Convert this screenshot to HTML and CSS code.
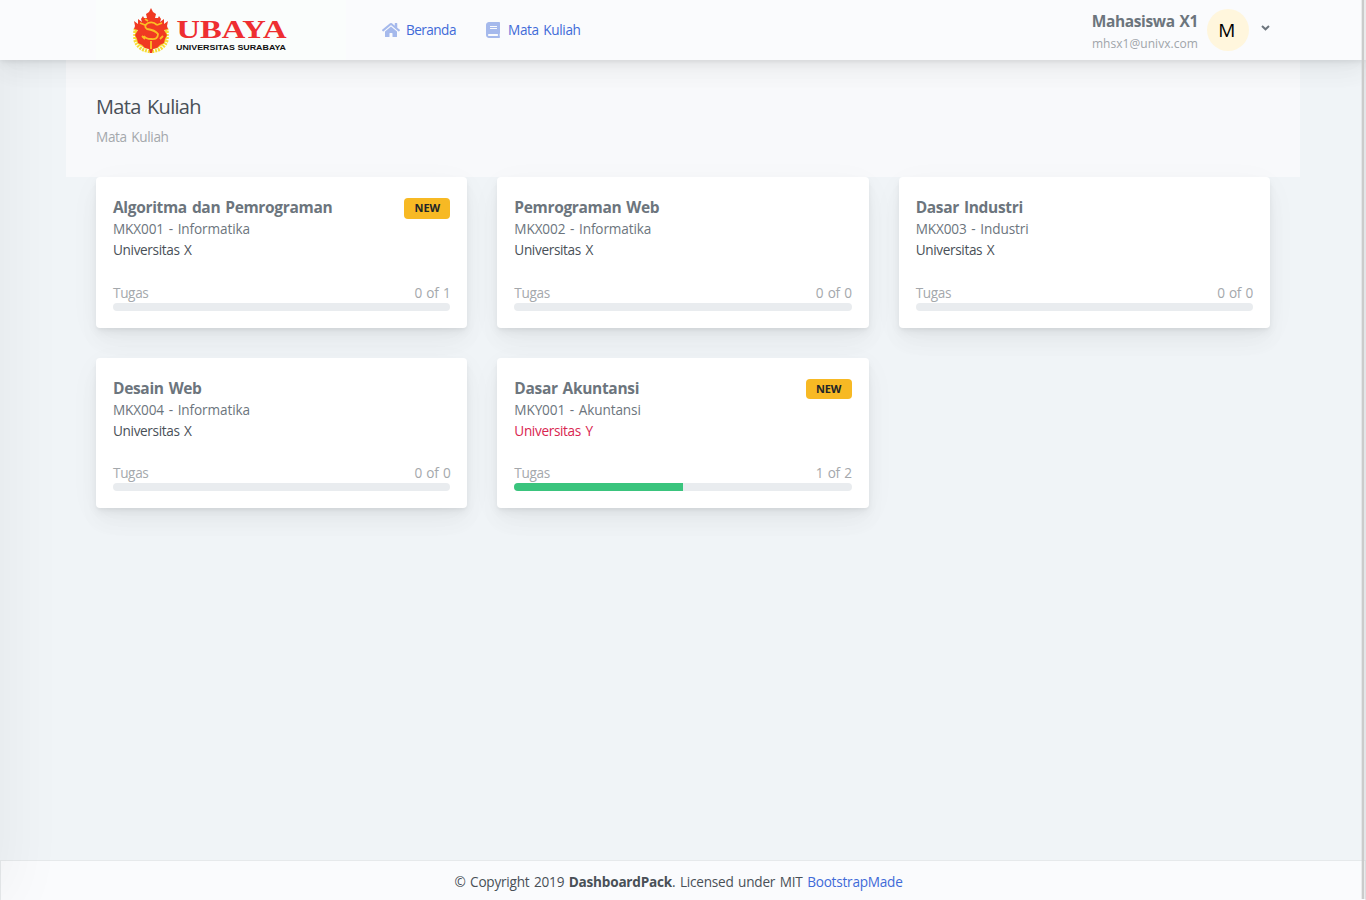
FILE: index.html
```html
<!DOCTYPE html>
<html lang="id">
<head>
<meta charset="utf-8">
<title>Mata Kuliah</title>
<link rel="stylesheet" href="styles.css">
</head>
<body>
<div class="app">
  <header class="header">
    <div class="brand">
      <svg class="brand-logo" width="156" height="50" viewBox="0 0 156 50" role="img" aria-label="UBAYA Universitas Surabaya">
        <g fill="none" stroke="#f7dc35">
          <path d="M1.500 24.500h5M31.500 24.500h5" stroke-width="2"/>
          <path d="M4 25v8q2 8 13 10M34 25v8q-2 8-13 10" stroke-width="2"/>
          <path d="M3 26v9q3 10 15 11.500M35 26v9q-3 10-15 11.500" stroke-width="3.500" stroke-dasharray="2 1"/>
        </g>
        <path fill="#f03a22" d="M19 3l2 4 3 2-1 4 3 0 1-2 2 3-1 3 4-3 0 5 4-3-1 5 1 3-4 1 3 5-2 4-1 4-4 2-3 3-4 1-1 4h-2l-1-4-4-1-3-3-4-2-1-4-2-4 3-5-4-1 1-3-1-5 4 3 0-5 4 3-1-3 2-3 1 2 3 0-1-4 3-2z"/>
        <path d="M25 20q-4-4-9-2-5 3-1 6 8 1 11 5 0 6-7 5-5 0-7-3M13 14l3 2M8 18l5 2M30 18l-5 2M19 36v8M10 31l3 3M28 34l3-3" fill="none" stroke="#fbbf24" stroke-width="1.800"/>
        <text class="logo-name" x="44.500" y="33" textLength="110" lengthAdjust="spacingAndGlyphs">UBAYA</text>
        <text class="logo-sub" x="44" y="45" textLength="110" lengthAdjust="spacingAndGlyphs">UNIVERSITAS SURABAYA</text>
      </svg>
    </div>
    <nav class="nav">
      <a class="nav-link" href="#"><svg class="home-icon" width="18" height="16" viewBox="0 0 576 512"><path d="M280.37 148.26L96 300.11V464a16 16 0 0 0 16 16l112.06-.29a16 16 0 0 0 15.92-16V368a16 16 0 0 1 16-16h64a16 16 0 0 1 16 16v95.64a16 16 0 0 0 16 16.05L464 480a16 16 0 0 0 16-16V300L295.67 148.26a12.19 12.19 0 0 0-15.3 0zM571.6 251.47L488 182.56V44.05a12 12 0 0 0-12-12h-56a12 12 0 0 0-12 12v72.61L318.47 43a48 48 0 0 0-61 0L4.34 251.47a12 12 0 0 0-1.6 16.9l25.5 31A12 12 0 0 0 45.15 301l235.22-193.74a12.19 12.19 0 0 1 15.3 0L530.9 301a12 12 0 0 0 16.9-1.6l25.5-31a12 12 0 0 0-1.7-16.93z"/></svg><span class="home-label">Beranda</span></a>
      <a class="nav-link" href="#"><svg class="book-icon" width="14" height="16" viewBox="0 0 448 512"><path d="M448 360V24c0-13.300-10.700-24-24-24H96C43 0 0 43 0 96v320c0 53 43 96 96 96h328c13.300 0 24-10.700 24-24v-16c0-7.500-3.500-14.300-8.900-18.700-4.200-15.400-4.200-59.300 0-74.700 5.400-4.300 8.900-11.100 8.900-18.600zM128 134c0-3.300 2.700-6 6-6h212c3.300 0 6 2.700 6 6v20c0 3.300-2.700 6-6 6H134c-3.300 0-6-2.700-6-6v-20zm0 64c0-3.300 2.700-6 6-6h212c3.300 0 6 2.700 6 6v20c0 3.300-2.700 6-6 6H134c-3.300 0-6-2.700-6-6v-20zm253.400 250H96c-17.700 0-32-14.300-32-32 0-17.600 14.400-32 32-32h285.400c-1.900 17.100-1.900 46.900 0 64z"/></svg><span class="nav-label">Mata Kuliah</span></a>
    </nav>
    <div class="user">
      <div class="user-text"><div class="user-name">Mahasiswa X1</div><div class="user-mail">mhsx1@univx.com</div></div>
      <div class="avatar">M</div>
      <svg class="caret" width="9" height="6" viewBox="0 0 9 6"><path d="M1 1l3.500 3.300L8 1"/></svg>
    </div>
  </header>
  <main class="main">
    <section class="title-bar"><h1 class="title">Mata Kuliah</h1><p class="subtitle">Mata Kuliah</p></section>
    <section class="cards">
      <article class="card"><div class="card-head"><h2 class="course">Algoritma dan Pemrograman</h2><span class="badge">NEW</span></div><div class="code">MKX001 - Informatika</div><div class="univ">Universitas X</div><div class="task"><span>Tugas</span><span class="count">0 of 1</span></div><div class="track"></div></article>
      <article class="card"><div class="card-head"><h2 class="course">Pemrograman Web</h2></div><div class="code">MKX002 - Informatika</div><div class="univ">Universitas X</div><div class="task"><span>Tugas</span><span class="count">0 of 0</span></div><div class="track"></div></article>
      <article class="card"><div class="card-head"><h2 class="course">Dasar Industri</h2></div><div class="code">MKX003 - Industri</div><div class="univ">Universitas X</div><div class="task"><span>Tugas</span><span class="count">0 of 0</span></div><div class="track"></div></article>
      <article class="card"><div class="card-head"><h2 class="course">Desain Web</h2></div><div class="code">MKX004 - Informatika</div><div class="univ">Universitas X</div><div class="task"><span>Tugas</span><span class="count">0 of 0</span></div><div class="track"></div></article>
      <article class="card"><div class="card-head"><h2 class="course">Dasar Akuntansi</h2><span class="badge">NEW</span></div><div class="code">MKY001 - Akuntansi</div><div class="univ other">Universitas Y</div><div class="task"><span>Tugas</span><span class="count">1 of 2</span></div><div class="track"><div class="fill" style="width:50%"></div></div></article>
    </section>
  </main>
  <footer class="footer"><p class="legal">© Copyright 2019 <strong>DashboardPack</strong>. Licensed under MIT <a href="#">BootstrapMade</a></p></footer>
  <div class="edge-shadow"></div>
  <div class="scrollbar"></div>
</div>
</body>
</html>
```

FILE: styles.css
```css
* { box-sizing: border-box; }
body { margin: 0; font-family: "Open Sans", "Noto Sans", sans-serif; font-size: 13.6px; letter-spacing: -.35px; word-spacing: 1.3px; line-height: 21px; color: #495057; background: #f0f4f7; overflow: hidden; }
h1, h2, p { margin: 0; font-weight: 400; }
a { color: #3f6ad8; text-decoration: none; }
.app { position: relative; height: 900px; display: flex; flex-direction: column; }
.header { position: relative; z-index: 2; height: 60px; flex: none; display: flex; align-items: center; padding: 0 96px 0 96px; background: #fafbfd; box-shadow: 0 7.500px 35px rgba(4,9,20,.03), 0 15px 22.500px rgba(4,9,20,.03), 0 4px 8.500px rgba(4,9,20,.05), 0 2px 3px rgba(4,9,20,.03); }
.brand { width: 250px; height: 60px; margin-right: 36px; padding: 5px 0 0 36px; background: #fafdfc; }
.brand-logo { display: block; letter-spacing: 0; word-spacing: 0; }
.logo-name { font: bold 26px "Liberation Serif", serif; fill: #ee2e31; }
.logo-sub { font: bold 8px "Liberation Sans", sans-serif; fill: #111; }
.nav { display: flex; gap: 30px; }
.nav-link { display: flex; align-items: center; }
.nav-link svg { fill: #3f6ad8; opacity: .45; }
.home-icon { margin-right: 6px; }
.home-label { width: 50px; letter-spacing: -.55px; padding-bottom: 1px; }
.nav-label { padding-bottom: 1px; }
.book-icon { margin-right: 8px; }
.user { margin-left: auto; display: flex; align-items: center; }
.user-text { text-align: right; margin-right: 9px; padding-top: 5px; }
.user-name { font-size: 15.5px; letter-spacing: -.38px; font-weight: 700; color: #6c757d; line-height: 21px; }
.user-mail { font-size: 12px; letter-spacing: .05px; line-height: 23px; color: #a0a5aa; }
.avatar { width: 42px; height: 42px; border-radius: 50%; background: #fff6dd; color: #000; font-size: 19px; line-height: 42px; text-align: center; padding-right: 3px; }
.caret { margin: -4px 0 0 12px; fill: none; stroke: #6c757d; stroke-width: 2; }
.main { flex: 1; padding: 0 66px; }
.title-bar { height: 117px; padding: 33px 30px 0; background: #f8f9fb; }
.title { font-size: 20px; line-height: 28px; letter-spacing: -.7px; word-spacing: 2px; }
.subtitle { margin-top: 5px; color: #a4a8ac; }
.cards { display: grid; grid-template-columns: repeat(3, 1fr); gap: 30px; padding: 0 30px; }
.card { height: 150.500px; padding: 17px; border-radius: 4px; background: #fff; box-shadow: 0 7.500px 35px rgba(4,9,20,.03), 0 15px 22.500px rgba(4,9,20,.03), 0 4px 8.500px rgba(4,9,20,.05), 0 2px 3px rgba(4,9,20,.03); }
.card-head { height: 24.2px; display: flex; justify-content: space-between; align-items: flex-start; }
.course { font-size: 15.5px; letter-spacing: -.33px; line-height: 26px; font-weight: 700; color: #6c757d; }
.badge { width: 46px; height: 20.5px; margin-top: 4px; border-radius: 4px; background: #f7b924; color: #212529; font-size: 11px; line-height: 20px; font-weight: 700; text-align: center; letter-spacing: -.1px; }
.code { color: #6c757d; letter-spacing: -.12px; }
.univ.other { color: #d92550; }
.task { display: flex; justify-content: space-between; margin-top: 21.8px; color: #a4a8ac; }
.track { height: 8px; margin-top: -.2px; border-radius: 4px; background: #e9ecef; overflow: hidden; }
.fill { height: 8px; background: #3ac47d; }
.footer { height: 40px; border: 1px solid #e6e9eb; border-bottom: 0; background: #fafbfd; text-align: center; padding: 10px 9px 0 0; }
.legal { letter-spacing: -.23px; }
.legal strong { font-weight: 700; }
.edge-shadow { position: absolute; z-index: 1; left: -280px; top: 0; width: 280px; height: 900px; pointer-events: none; box-shadow: 7px 0 60px rgba(0,0,0,.05); }
.scrollbar { position: absolute; z-index: 4; right: 0; top: 0; width: 5px; height: 899px; border: solid rgba(200,200,200,.3); border-width: 0 2px 0 1px; background: #cbcbcb; background-clip: padding-box; }
```
